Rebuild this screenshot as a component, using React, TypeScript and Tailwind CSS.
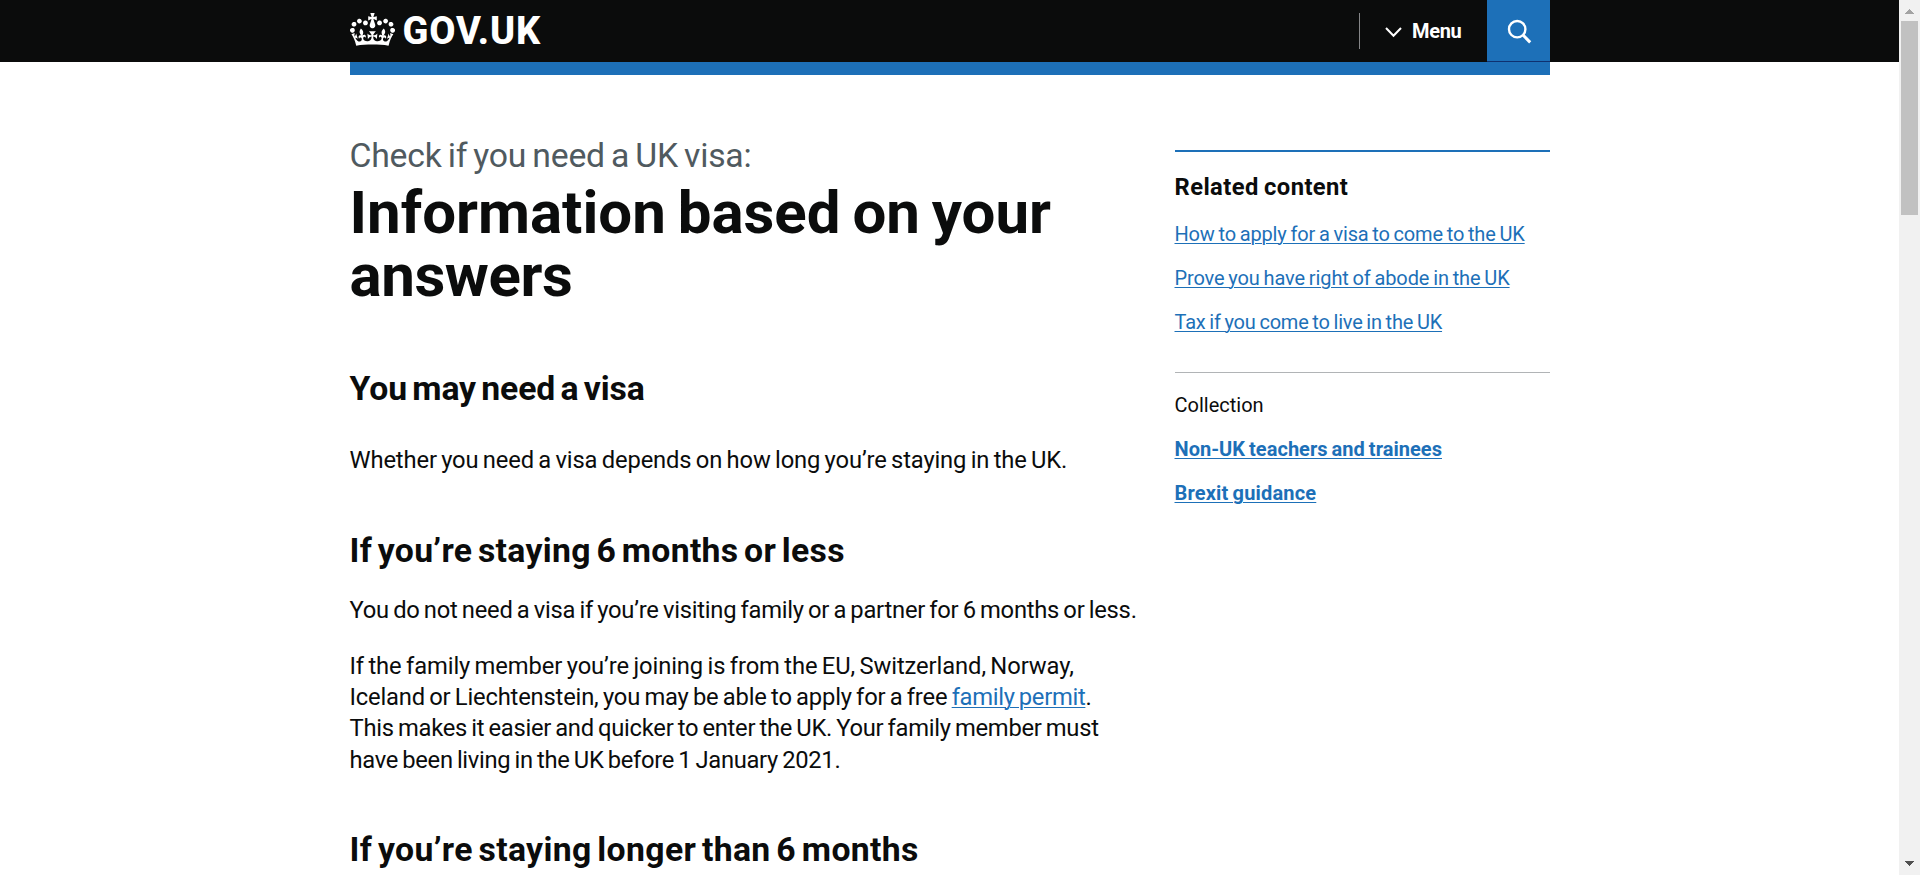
import type { ReactNode } from 'react';

const CROWN =
  'M25 30.2c3.5 1.5 7.7-.2 9.1-3.7 1.5-3.6-.2-7.8-3.9-9.2-3.6-1.4-7.6.3-9.1 3.9-1.4 3.5.3 7.5 3.9 9zM9 39.5c3.6 1.5 7.8-.2 9.2-3.7 1.5-3.6-.2-7.8-3.9-9.1-3.6-1.5-7.6.2-9.1 3.8-1.4 3.5.3 7.5 3.8 9zM4.4 57.2c3.5 1.5 7.7-.2 9.1-3.8 1.5-3.6-.2-7.7-3.9-9.1-3.5-1.5-7.6.3-9.1 3.8-1.4 3.5.3 7.6 3.9 9.1zm38.3-21.4c3.5 1.5 7.7-.2 9.1-3.8 1.5-3.6-.2-7.7-3.9-9.1-3.6-1.5-7.6.3-9.1 3.8-1.3 3.6.4 7.7 3.9 9.1zm64.4-5.6c-3.6 1.5-7.8-.2-9.1-3.7-1.5-3.6.2-7.8 3.8-9.2 3.6-1.4 7.7.3 9.2 3.9 1.3 3.5-.4 7.5-3.9 9zm15.9 9.3c-3.6 1.5-7.7-.2-9.1-3.7-1.5-3.6.2-7.8 3.7-9.1 3.6-1.5 7.7.2 9.2 3.8 1.5 3.5-.3 7.5-3.8 9zm4.7 17.7c-3.6 1.5-7.8-.2-9.2-3.8-1.5-3.6.2-7.7 3.9-9.1 3.6-1.5 7.7.3 9.2 3.8 1.3 3.5-.4 7.6-3.9 9.1zM89.3 35.8c-3.6 1.5-7.8-.2-9.2-3.8-1.4-3.6.2-7.7 3.9-9.1 3.6-1.5 7.7.3 9.2 3.8 1.4 3.6-.3 7.7-3.9 9.1zM69.7 17.7l8.9 4.7V9.3l-8.9 2.8c-.2-.3-.5-.6-.9-.9L72.4 0H59.6l3.5 11.2c-.3.3-.6.5-.9.9l-8.8-2.8v13.1l8.8-4.7c.3.3.6.7.9.9l-5 15.4v.1c-.2.8-.4 1.6-.4 2.4 0 4.1 3.1 7.5 7 8.1h.2c.3 0 .7.1 1 .1.4 0 .7 0 1-.1h.2c4-.6 7.1-4.1 7.1-8.1 0-.8-.1-1.7-.4-2.4V34l-5.1-15.4c.4-.2.7-.6 1-.9zM66 92.8c16.9 0 32.8 1.1 47.1 3.2 4-16.9 8.9-26.7 14-33.5l-9.6-3.4c1 4.9 1.1 7.2 0 10.2-1.5-1.4-3-4.3-4.2-8.7L108.6 76c2.8-2 5-3.2 7.5-3.3-4.4 9.4-10 11.9-13.6 11.2-4.3-.8-6.3-4.6-5.6-7.9 1-4.7 5.7-5.9 8-.5 4.3-8.7-3-11.4-7.6-8.8 7.1-7.2 7.9-13.5 2.1-21.1-8 6.1-8.1 12.3-4.5 20.8-4.7-5.4-12.1-2.5-9.5 6.2 3.4-5.2 7.9-2 7.2 3.1-.6 4.3-6.4 7.8-13.5 7.2-10.3-.9-10.9-8-11.2-13.8 2.5-.5 7.1 1.8 11 7.3L80.2 60c-4.1 4.4-8 5.3-12.3 5.4 1.4-4.4 8-11.6 8-11.6H55.5s6.4 7.2 7.9 11.6c-4.2-.1-8-1-12.3-5.4l1.4 16.4c3.9-5.5 8.5-7.7 10.9-7.3-.3 5.8-.9 12.8-11.1 13.8-7.2.6-12.9-2.9-13.5-7.2-.7-5 3.8-8.3 7.1-3.1 2.7-8.7-4.6-11.6-9.4-6.2 3.7-8.5 3.6-14.7-4.6-20.8-5.8 7.6-5 13.9 2.2 21.1-4.7-2.6-11.9.1-7.7 8.8 2.3-5.5 7.1-4.2 8.1.5.7 3.3-1.3 7.1-5.7 7.9-3.5.7-9-1.8-13.5-11.2 2.5.1 4.7 1.3 7.5 3.3l-4.7-15.4c-1.2 4.4-2.7 7.2-4.3 8.7-1.1-3-.9-5.3 0-10.2l-9.5 3.4c5 6.9 9.9 16.7 14 33.5 14.8-2.1 30.8-3.2 47.7-3.2z';

function Header() {
  return (
    <header className="h-[62px] bg-[#0b0c0c] text-white">
      <div className="mx-auto flex h-full w-[1200px] items-start justify-between">
        <a href="#" className="flex items-start" aria-label="GOV.UK home">
          <svg viewBox="0 0 132 97" className="mt-[13px] h-[33px] w-[45px] shrink-0" fill="currentColor" preserveAspectRatio="none">
            <path fillRule="evenodd" d={CROWN} />
          </svg>
          <span className="ml-[8px] mt-[6px] text-[38px] leading-[50px] font-extrabold tracking-[0.9px]">GOV.UK</span>
        </a>
        <nav className="flex h-full items-start">
          <button className="mt-[13px] flex h-[36px] items-start border-l border-[#858688] pr-[25px] pl-[25px]">
            <svg viewBox="0 0 17 11" className="mt-[14px] h-[11px] w-[17px]" fill="none" stroke="currentColor" strokeWidth="2">
              <path d="M1 1 L8.5 8.7 L16 1" />
            </svg>
            <span className="ml-[10px] mt-[6px] text-[20px] leading-[25px] font-bold tracking-[-0.3px]">Menu</span>
          </button>
          <button className="flex h-[62px] w-[63px] items-start border-b border-[#0f3170] bg-[#1d70b8] pt-[19px] pl-[20px]" aria-label="Search">
            <svg viewBox="0 0 25 25" className="h-[25px] w-[25px]" fill="none" stroke="currentColor">
              <circle cx="10.2" cy="10.2" r="8.2" strokeWidth="2.4" />
              <path d="M16 16 L23.2 23.4" strokeWidth="3" />
            </svg>
          </button>
        </nav>
      </div>
    </header>
  );
}

function Line({ className, children }: { className: string; children: ReactNode }) {
  return <span className={`block whitespace-nowrap ${className}`}>{children}</span>;
}

const LINK = 'text-[#1d70b8] underline decoration-1 underline-offset-2';

function Guidance() {
  return (
    <main className="w-[800px] pt-[61px] [word-spacing:-3px]">
      <h1>
        <Line className="text-[33.75px] leading-[40px] tracking-[-0.23px] [word-spacing:-2px] text-[#505a5f]">Check if you need a UK visa:</Line>
        <span className="mt-[6px] block text-[60px] leading-[62.5px] font-bold">
          <Line className="tracking-[0px]">Information based on your</Line>
          <Line className="tracking-[-0.4px]">answers</Line>
        </span>
      </h1>
      <h2 className="mt-[62.5px] text-[33.75px] leading-[37.5px] font-bold tracking-[-0.1px]">You may need a visa</h2>
      <p className="mt-[38px] text-[23.75px] leading-[31.25px] tracking-[-0.135px] [word-spacing:-1.4px]">
        Whether you need a visa depends on how long you’re staying in the UK.
      </p>
      <h2 className="mt-[55.25px] text-[33.75px] leading-[37.5px] font-bold tracking-[0.3px]">If you’re staying 6 months or less</h2>
      <div className="text-[23.75px] leading-[31.25px] [word-spacing:-1.4px]">
        <p className="mt-[26px] tracking-[-0.244px]">
          You do not need a visa if you’re visiting family or a partner for 6 months or less.
        </p>
        <p className="mt-[24.5px]">
          <Line className="tracking-[-0.093px]">If the family member you’re joining is from the EU, Switzerland, Norway,</Line>
          <Line className="tracking-[-0.18px]">
            Iceland or Liechtenstein, you may be able to apply for a free{' '}
            <a href="#" className={`${LINK} tracking-[-0.3px]`}>family permit</a>.
          </Line>
          <Line className="tracking-[-0.27px]">This makes it easier and quicker to enter the UK. Your family member must</Line>
          <Line className="tracking-[-0.3px]">have been living in the UK before 1 January 2021.</Line>
        </p>
      </div>
      <h2 className="mt-[55.25px] text-[33.75px] leading-[37.5px] font-bold tracking-[0.35px]">If you’re staying longer than 6 months</h2>
    </main>
  );
}

function Related() {
  return (
    <aside className="mt-[75px] w-[375px] text-[20px] leading-[25px] [word-spacing:-1px]">
      <section className="border-t-2 border-[#1d70b8] pt-[20px]">
        <h2 className="text-[23.75px] leading-[31.25px] font-bold tracking-[0.42px]">Related content</h2>
        <ul className="mt-[18.5px] flex flex-col gap-[19px]">
          <li className="tracking-[-0.16px]"><a href="#" className={LINK}>How to apply for a visa to come to the UK</a></li>
          <li className="tracking-[-0.12px]"><a href="#" className={LINK}>Prove you have right of abode in the UK</a></li>
          <li className="tracking-[-0.2px]"><a href="#" className={LINK}>Tax if you come to live in the UK</a></li>
        </ul>
      </section>
      <section className="mt-[37.25px] border-t border-[#b1b4b6] pt-[19.75px]">
        <h3>Collection</h3>
        <ul className="mt-[19px] flex flex-col gap-[19px] font-bold">
          <li className="tracking-[0.03px]"><a href="#" className={LINK}>Non-UK teachers and trainees</a></li>
          <li className="tracking-[0.17px]"><a href="#" className={LINK}>Brexit guidance</a></li>
        </ul>
      </section>
    </aside>
  );
}

function Scrollbar() {
  return (
    <div className="flex h-full w-[21px] shrink-0 flex-col items-center bg-[#f1f1f1]" aria-hidden="true">
      <svg viewBox="0 0 9 5" className="mt-[9px] h-[5px] w-[9px]" fill="#a3a3a3" shapeRendering="crispEdges">
        <path d="M4 0h1v1h1v1h1v1h1v1h1v1H0V4h1V3h1V2h1V1h1z" />
      </svg>
      <div className="mt-[7px] h-[194px] w-[17px] bg-[#c1c1c1]" />
      <svg viewBox="0 0 9 5" className="mt-auto mb-[9px] h-[5px] w-[9px]" fill="#505050" shapeRendering="crispEdges">
        <path d="M0 0h9v1H8v1H7v1H6v1H5v1H4V4H3V3H2V2H1V1H0z" />
      </svg>
    </div>
  );
}

export default function App() {
  return (
    <div className="flex h-[875px] overflow-hidden bg-white font-['Roboto',sans-serif] text-[#0b0c0c]">
      <div className="h-full flex-1 overflow-hidden">
        <Header />
        <div className="mx-auto w-[1200px]">
          <div className="h-[13px] bg-[#1d70b8]" />
          <div className="flex items-start justify-between">
            <Guidance />
            <Related />
          </div>
        </div>
      </div>
      <Scrollbar />
    </div>
  );
}
